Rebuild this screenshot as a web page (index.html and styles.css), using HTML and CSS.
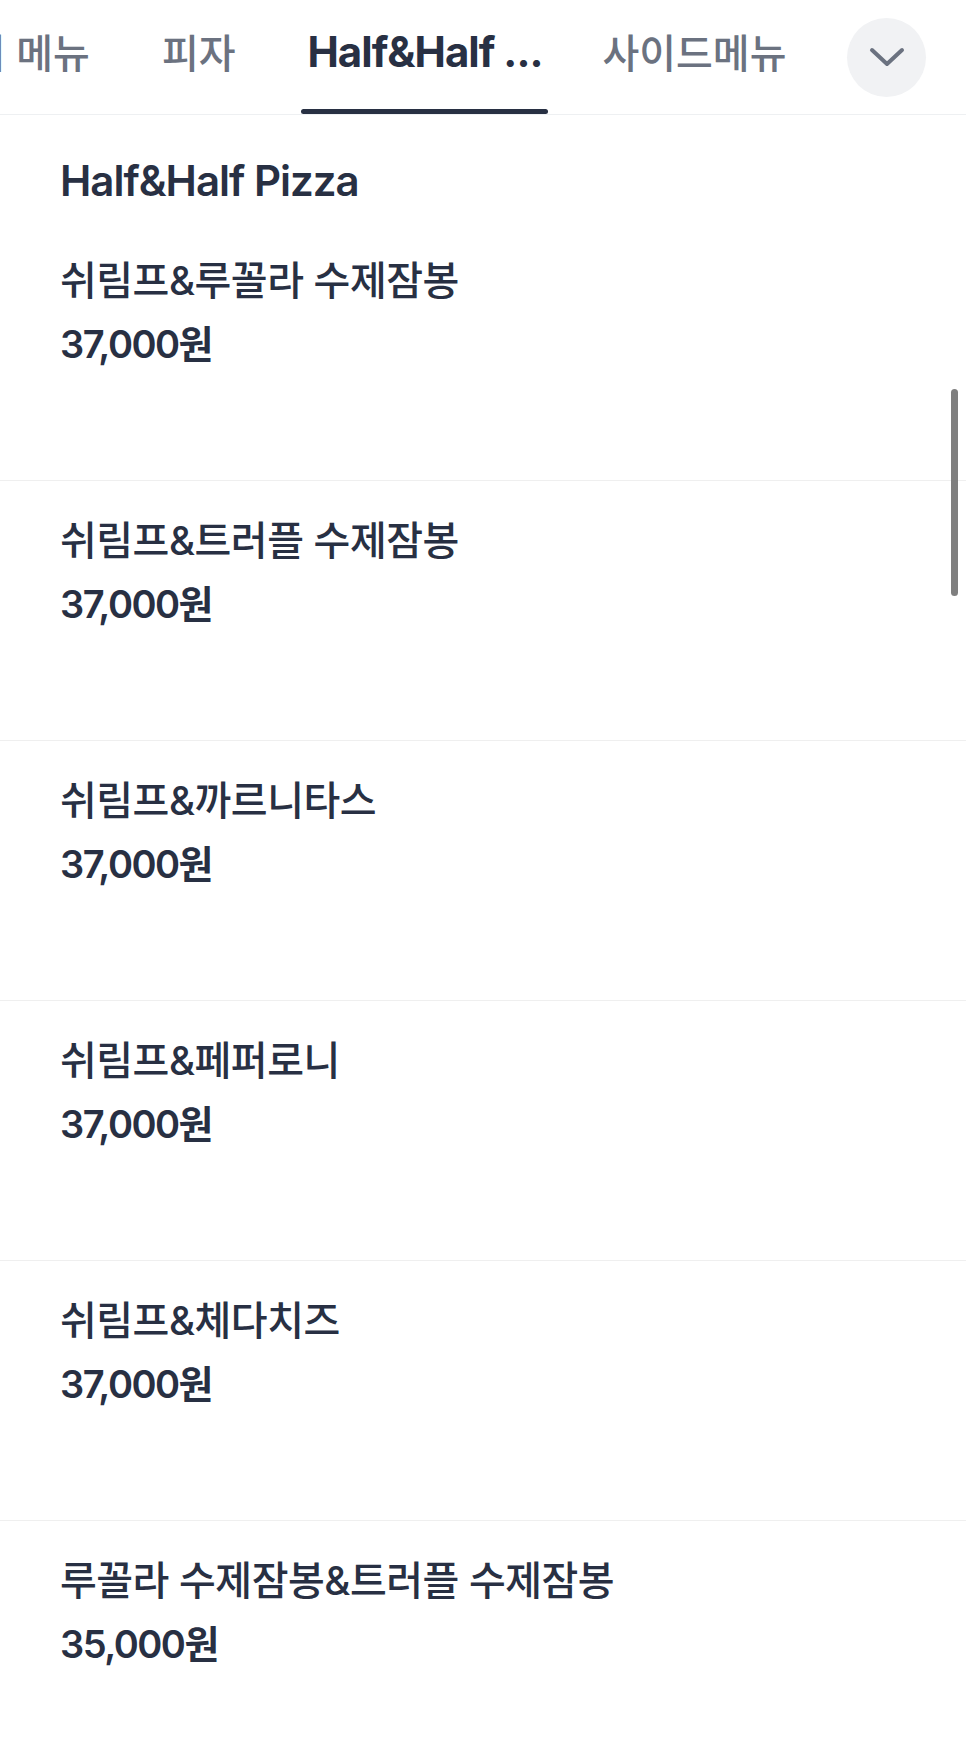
FILE: index.html
```html
<!DOCTYPE html>
<html lang="ko">
<head>
<meta charset="utf-8">
<title>Half&amp;Half Pizza</title>
<link rel="stylesheet" href="styles.css">
</head>
<body>
<header class="tabbar">
  <nav class="tabs">
    <a class="tab">인기 메뉴</a>
    <a class="tab">피자</a>
    <a class="tab tab-active">Half&amp;Half ...</a>
    <a class="tab">사이드메뉴</a>
  </nav>
  <button class="more" aria-label="더보기">
    <svg width="36" height="20" viewBox="0 0 36 20"><path d="M3 3 L18 17 L33 3" fill="none" stroke="#6b7280" stroke-width="4" stroke-linecap="round" stroke-linejoin="round"/></svg>
  </button>
</header>
<main class="menu">
  <h2 class="section-title">Half&amp;Half Pizza</h2>
  <ul class="items">
    <li class="item"><p class="name">쉬림프&amp;루꼴라 수제잠봉</p><p class="price">37,000원</p></li>
    <li class="item"><p class="name">쉬림프&amp;트러플 수제잠봉</p><p class="price">37,000원</p></li>
    <li class="item"><p class="name">쉬림프&amp;까르니타스</p><p class="price">37,000원</p></li>
    <li class="item"><p class="name">쉬림프&amp;페퍼로니</p><p class="price">37,000원</p></li>
    <li class="item"><p class="name">쉬림프&amp;체다치즈</p><p class="price">37,000원</p></li>
    <li class="item"><p class="name">루꼴라 수제잠봉&amp;트러플 수제잠봉</p><p class="price">35,000원</p></li>
  </ul>
</main>
<div class="scrollbar"></div>
</body>
</html>
```
FILE: styles.css
```css
* { box-sizing: border-box; }
html, body {
  margin: 0;
  padding: 0;
  background: #ffffff;
}
body {
  font-family: "Inter", "Noto Sans CJK KR", sans-serif;
  color: #283043;
  width: 966px;
  height: 1744px;
  overflow: hidden;
  position: relative;
}
.tabbar {
  display: flex;
  align-items: center;
  height: 115px;
  border-bottom: 1px solid #eef0f2;
  padding-right: 40px;
}
.tabs {
  flex: 1;
  display: flex;
  align-self: stretch;
  gap: 60px;
  overflow: hidden;
}
.tab {
  position: relative;
  display: flex;
  align-items: center;
  padding: 0 6px 12px;
  font-size: 40px;
  font-weight: 500;
  color: #6b7280;
  white-space: nowrap;
}
.tab:first-child { margin-left: -74px; }
.tab-active {
  color: #283043;
  font-size: 42px;
  font-weight: 700;
  letter-spacing: -1px;
  margin-right: -12px;
}
.tab-active::after {
  content: "";
  position: absolute;
  left: 0;
  right: 0;
  bottom: 0;
  height: 5px;
  border-radius: 3px;
  background: #283043;
}
.more {
  flex: none;
  width: 79px;
  height: 79px;
  margin-left: 16px;
  border: none;
  border-radius: 50%;
  background: #f1f2f4;
  display: flex;
  align-items: center;
  justify-content: center;
  padding: 0;
}
.menu { padding: 0; }
.section-title {
  margin: 0;
  padding: 41px 60px 15px;
  font-size: 42px;
  line-height: 50px;
  font-weight: 600;
  letter-spacing: -1px;
}
.items {
  list-style: none;
  margin: 0;
  padding: 0;
}
.item {
  height: 260px;
  padding: 36px 60px 0;
  border-bottom: 1px solid #efefef;
}
.name {
  margin: 0;
  font-size: 40px;
  line-height: 48px;
  font-weight: 500;
  letter-spacing: -0.5px;
}
.price {
  margin: 15px 0 0;
  font-size: 38px;
  line-height: 48px;
  font-weight: 600;
  letter-spacing: -1.5px;
}
.scrollbar {
  position: absolute;
  right: 8px;
  top: 389px;
  width: 7px;
  height: 207px;
  border-radius: 4px;
  background: #7f7f7f;
}
```
